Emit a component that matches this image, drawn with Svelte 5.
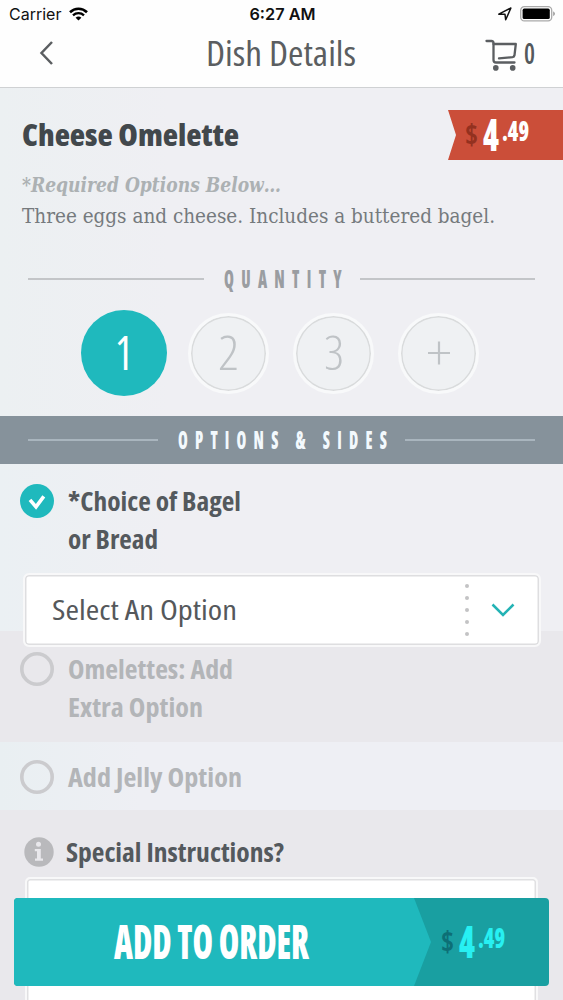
<script>
    let quantity = $state(1);
    const quantities = [
        { value: 1, width: 18 },
        { value: 2, width: 21 },
        { value: 3, width: 20 }
    ];

    let options = $state([
        {
            id: 'bagel',
            lines: [{ text: '*Choice of Bagel', width: 173 }, { text: 'or Bread', width: 90 }],
            checked: true
        },
        {
            id: 'extra',
            lines: [{ text: 'Omelettes: Add', width: 165 }, { text: 'Extra Option', width: 135 }],
            checked: false
        },
        {
            id: 'jelly',
            lines: [{ text: 'Add Jelly Option', width: 174 }],
            checked: false
        }
    ]);
</script>

<!-- condensed label: the baseline sits on the bottom edge of the svg -->
{#snippet label(text, width, size, name)}
    <svg class="label {name}" {width} height={size}>
        <text x="0" y={size} font-size={size} textLength={width} lengthAdjust="spacingAndGlyphs">{text}</text>
    </svg>
{/snippet}

{#snippet price()}
    <span class="price">
        {@render label('$', 13, 28, 'currency')}
        {@render label('4', 16, 44, 'whole')}
        {@render label('.49', 27, 29, 'cents')}
    </span>
{/snippet}

<div class="screen">
    <div class="status">
        <div class="carrier">
            <span>Carrier</span>
            <svg width="19" height="14" viewBox="0 0 19 14">
                <path d="M1 5.2C5.8.6 13.2.6 18 5.2" fill="none" stroke="#000" stroke-width="2.6" />
                <path d="M4 8.3c3.1-2.9 7.9-2.9 11 0" fill="none" stroke="#000" stroke-width="2.3" />
                <path d="M6.6 10.7c1.7-1.5 4.1-1.5 5.8 0L9.5 13.6z" />
            </svg>
        </div>
        <div class="time">6:27 AM</div>
        <div class="indicators">
            <svg width="14" height="14" viewBox="0 0 14 14">
                <path d="M.8 7.2 12.9 1 7.7 12.8 7 7.3z" fill="none" stroke="#111" stroke-width="1.5" stroke-linejoin="round" />
            </svg>
            <svg width="36" height="16" viewBox="0 0 36 16">
                <rect x=".7" y=".7" width="31" height="14.2" rx="3.6" fill="none" stroke="#aaa" stroke-width="1.3" />
                <rect x="2.6" y="2.6" width="27.2" height="10.4" rx="1.6" />
                <path d="M33.3 5.3q3 2.5 0 5z" fill="#888" />
            </svg>
        </div>
    </div>

    <header>
        <button class="back" aria-label="Back">
            <svg width="14" height="24" viewBox="0 0 14 24">
                <path d="M13 1 2.5 12 13 23" fill="none" stroke="#5b5e61" stroke-width="2.5" />
            </svg>
        </button>
        {@render label('Dish Details', 150, 35, 'title')}
        <button class="cart" aria-label="Cart">
            <svg width="32" height="32" viewBox="0 0 32 32">
                <g fill="none" stroke="#5b5e61" stroke-width="2.3" stroke-linecap="round" stroke-linejoin="round">
                    <path d="M1.5 2h5q1.7 0 2 1.7V21q0 2.5 2.5 2.5h18.5" />
                    <path d="M8.5 5h22.3l-1.3 11.3q-.3 1.7-2 1.9L14 19.3" />
                </g>
                <circle cx="10.8" cy="28.9" r="2.8" fill="#5b5e61" />
                <circle cx="27.7" cy="28.9" r="2.8" fill="#5b5e61" />
            </svg>
            {@render label('0', 11, 29, 'count')}
        </button>
    </header>

    <section class="dish">
        <div class="heading">
            {@render label('Cheese Omelette', 217, 30, 'name')}
            <div class="ribbon">{@render price()}</div>
        </div>
        {@render label('*Required Options Below…', 259, 21, 'required')}
        {@render label('Three eggs and cheese. Includes a buttered bagel.', 473, 21, 'description')}

        <div class="divider">
            <i></i>
            {@render label('QUANTITY', 125, 24, 'caps')}
            <i></i>
        </div>

        <div class="quantities">
            {#each quantities as q}
                <button class="qty" class:selected={quantity === q.value} onclick={() => (quantity = q.value)}>
                    {@render label(q.value, q.width, 47, 'digit')}
                </button>
            {/each}
            <button class="qty" aria-label="More" onclick={() => (quantity += 1)}>
                <svg width="22" height="24" viewBox="0 0 22 24">
                    <path d="M0 12h22M11 .5v23" stroke="#bfc3c6" stroke-width="2.2" />
                </svg>
            </button>
        </div>
    </section>

    <div class="band">
        <div class="divider">
            <i></i>
            {@render label('OPTIONS & SIDES', 216, 24, 'caps')}
            <i></i>
        </div>
    </div>

    {#each options as option}
        <section class="option {option.id}" class:checked={option.checked}>
            <div class="row">
                <svg class="mark" width="34" height="34" viewBox="0 0 34 34">
                    {#if option.checked}
                        <circle cx="17" cy="17" r="17" fill="#1fb9bd" />
                        <path d="m10 15.800 6 7 7.800-10.400" fill="none" stroke="#fff" stroke-width="3.6" />
                    {:else}
                        <circle cx="17" cy="17" r="15.2" fill="none" stroke="#cbcbce" stroke-width="3.6" />
                    {/if}
                </svg>
                <div class="lines">
                    {#each option.lines as line}
                        {@render label(line.text, line.width, 27, 'choice')}
                    {/each}
                </div>
            </div>
            {#if option.checked}
                <div class="select">
                    {@render label('Select An Option', 185, 27, 'placeholder')}
                    <div class="dots">
                        {#each [1, 2, 3, 4, 5] as dot (dot)}<b></b>{/each}
                    </div>
                    <svg width="24" height="14" viewBox="0 0 24 14">
                        <path d="m1.5 1.5 10.5 10.5L22.5 1.5" fill="none" stroke="#24b3b5" stroke-width="2.5" />
                    </svg>
                </div>
            {/if}
        </section>
    {/each}

    <section class="special">
        <div class="row">
            <svg width="30" height="30" viewBox="0 0 30 30">
                <circle cx="15" cy="15" r="14.7" fill="#b9b9bc" />
                <circle cx="14.5" cy="7.3" r="2.5" fill="#e9e8ec" />
                <path d="M10.8 12h6v9.5h2.2v2.3h-8v-2.3h2v-7.2h-2.200z" fill="#e9e8ec" />
            </svg>
            {@render label('Special Instructions?', 218, 27, 'choice')}
        </div>
        <div class="note"></div>
    </section>

    <button class="order">
        <span class="action">{@render label('ADD TO ORDER', 195, 48, 'add')}</span>
        <span class="total">{@render price()}</span>
    </button>
</div>

<style>
    :global(body) {
        margin: 0;
        overflow: hidden;
    }

    .screen {
        position: relative;
        width: 563px;
        height: 1000px;
        overflow: hidden;
        background: #eeeff2;
        font-family: 'Open Sans', 'Noto Sans', sans-serif;
        font-stretch: 75%;
    }

    button {
        border: 0;
        padding: 0;
        background: none;
        font: inherit;
        cursor: pointer;
    }

    svg {
        display: block;
        flex: none;
    }

    .label {
        overflow: visible;
        fill: #54595d;
    }

    .status {
        display: grid;
        grid-template-columns: 1fr auto 1fr;
        align-items: center;
        height: 28px;
        padding: 0 7px 0 9px;
        background: #fefefe;
        color: #111;
        font-family: Inter, sans-serif;
        font-size: 16px;
        font-stretch: normal;
    }

    .carrier,
    .indicators {
        display: flex;
        align-items: center;
        gap: 8px;
    }

    .indicators {
        justify-content: flex-end;
    }

    .time {
        font-weight: 600;
        font-size: 16.3px;
    }

    header {
        display: flex;
        align-items: flex-start;
        height: 59px;
        background: #fefefe;
        border-bottom: 1px solid #cfd1d3;
    }

    .back {
        margin: 13px 153px 0 39px;
    }

    .title {
        margin-top: 3px;
        fill: #5b5e61;
    }

    .cart {
        display: flex;
        gap: 7px;
        margin: 11px 0 0 129px;
    }

    .count {
        margin-top: -4px;
        font-weight: 600;
    }

    .dish {
        height: 328px;
        box-sizing: border-box;
        padding-top: 22px;
        background: linear-gradient(90deg, #ecf0f2, #efeff3 30%);
    }

    .heading {
        display: flex;
        justify-content: space-between;
        height: 50px;
        padding-left: 22px;
    }

    .name {
        margin-top: 6px;
        font-weight: 800;
        fill: #42484c;
    }

    .ribbon {
        width: 115px;
        height: 50px;
        box-sizing: border-box;
        padding: 9px 0 0 17px;
        background: #cb4e39;
        clip-path: polygon(0 0, 100% 0, 100% 100%, 0 100%, 8px 50%);
    }

    .price {
        display: flex;
        align-items: flex-start;
        font-weight: 700;
    }

    .currency {
        margin: -2px 5px 0 0;
        fill: #93311f;
    }

    .whole {
        margin: -12px 3px 0 0;
        font-weight: 800;
        fill: #fff;
    }

    .cents {
        margin-top: -7px;
        font-weight: 800;
        fill: #fff;
    }

    .required,
    .description {
        margin-left: 22px;
        font-family: 'DejaVu Serif Condensed', 'DejaVu Serif', serif;
    }

    .required {
        margin-top: 11px;
        font-weight: 700;
        font-style: italic;
        fill: #acb1b3;
    }

    .description {
        margin-top: 10px;
        fill: #757a7d;
    }

    .divider {
        display: flex;
        align-items: center;
        height: 28px;
        padding: 0 28px;
    }

    .divider i {
        flex: 1;
        height: 2px;
        background: #c3c5c8;
    }

    .caps {
        margin: 0 11px 7px 20px;
        font-weight: 800;
        letter-spacing: 11px;
        fill: #9a9da1;
    }

    .dish .divider {
        margin-top: 42px;
    }

    .quantities {
        display: flex;
        align-items: center;
        gap: 24px;
        height: 86px;
        margin: 17px 0 0 81px;
    }

    .qty {
        display: flex;
        align-items: center;
        justify-content: center;
        width: 81px;
        height: 81px;
        box-sizing: border-box;
        border: 3px solid #f8f9fa;
        border-radius: 50%;
        box-shadow: inset 0 0 0 1.5px #d9dbdc;
        background: #eff1f3;
    }

    .qty.selected {
        width: 86px;
        height: 86px;
        margin-right: -3px;
        border: 0;
        box-shadow: none;
        background: #1fb9bd;
    }

    .digit {
        margin-bottom: 14px;
        font-weight: 300;
        fill: #bfc3c6;
    }

    .selected .digit {
        font-weight: 400;
        fill: #fff;
    }

    .band {
        height: 48px;
        box-sizing: border-box;
        padding-top: 10px;
        background: #86929b;
    }

    .band .divider i {
        background: #a9b5be;
    }

    .band .caps {
        fill: #f3f9fd;
    }

    .option,
    .special {
        box-sizing: border-box;
        background: #e9e8ec;
    }

    .row {
        display: flex;
        gap: 14px;
        padding-left: 20px;
    }

    .lines {
        display: flex;
        flex-direction: column;
        gap: 11px;
    }

    .choice {
        font-weight: 700;
        fill: #b3b5b8;
    }

    .checked .choice,
    .special .choice {
        fill: #54595d;
    }

    .bagel {
        height: 167px;
        padding-top: 20px;
        background: linear-gradient(90deg, #ebf0f3, #efeff3 30%);
    }

    .extra {
        height: 111px;
        padding-top: 21px;
    }

    .jelly {
        height: 68px;
        padding-top: 18px;
        background: linear-gradient(90deg, #e9eff2, #eeeff4 25%);
    }

    /* taller than its section, so it hangs over the next one */
    .select {
        position: relative;
        display: flex;
        align-items: center;
        width: 518px;
        height: 74px;
        box-sizing: border-box;
        margin: 24px 0 0 23px;
        padding: 0 24px 0 27px;
        border: 2px solid #f8f8f9;
        border-radius: 6px;
        box-shadow: inset 0 0 0 1.5px #dedee0;
        background: #fff;
    }

    .placeholder {
        margin: 0 auto 7px 0;
        fill: #55585b;
    }

    .dots {
        display: flex;
        flex-direction: column;
        gap: 8px;
        margin-right: 22px;
    }

    .dots b {
        width: 4px;
        height: 4px;
        border-radius: 50%;
        background: #c3c3c5;
    }

    .special {
        height: 190px;
        padding-top: 27px;
    }

    .special .row {
        gap: 12px;
        padding-left: 24px;
    }

    .special .choice {
        margin-top: -2px;
    }

    .note {
        height: 160px;
        margin: 10px 25px 0;
        border: 2px solid #f8f8f9;
        border-radius: 5px;
        box-shadow: inset 0 0 0 1.5px #e0e0e2;
        background: #fff;
    }

    .order {
        position: absolute;
        left: 14px;
        bottom: 14px;
        display: flex;
        width: 535px;
        height: 88px;
        border-radius: 4px;
        overflow: hidden;
        background: #199fa1;
    }

    .action {
        width: 417px;
        height: 88px;
        box-sizing: border-box;
        padding: 13px 0 0 100px;
        background: #1fb9bd;
        clip-path: polygon(0 0, 400px 0, 100% 50%, 400px 100%, 0 100%);
    }

    .add {
        font-weight: 800;
        fill: #fff;
    }

    .total {
        padding: 28px 0 0 10px;
    }

    .total .currency {
        fill: #0d6f76;
    }

    .total .whole,
    .total .cents {
        fill: #27f0f2;
    }
</style>
